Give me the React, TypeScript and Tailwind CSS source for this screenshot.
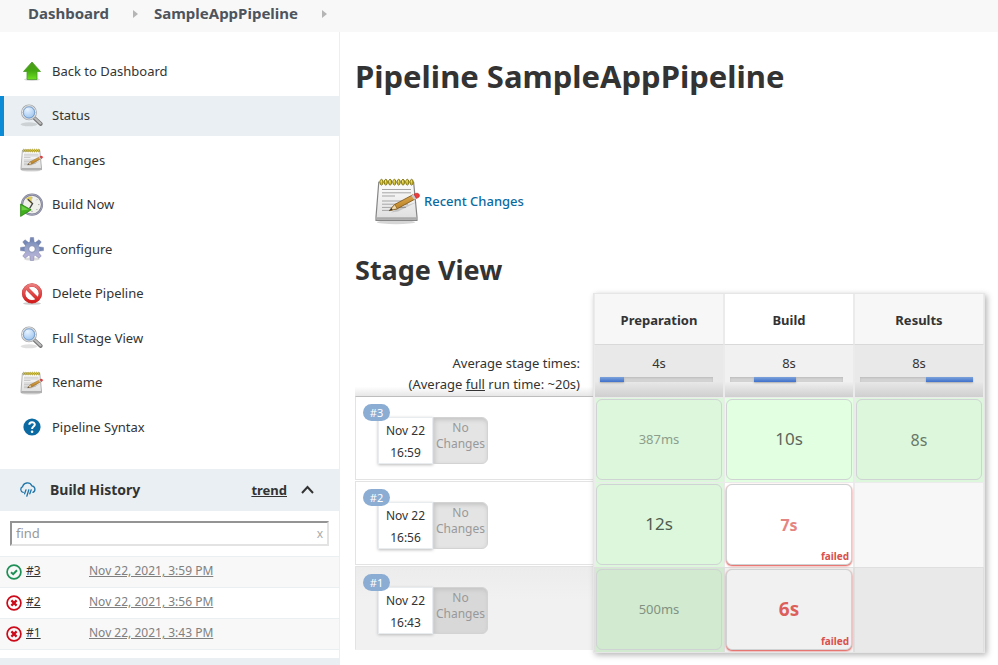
import { useState } from 'react';
import type { ReactNode } from 'react';

function ArrowUpIcon() {
  return (
    <svg width="24" height="24" viewBox="0 0 24 24" aria-hidden="true">
      <defs>
        <linearGradient id="up-green" x1="0" y1="0" x2="0" y2="1">
          <stop offset="0" stopColor="#4f9a1c" />
          <stop offset="0.5" stopColor="#43a80f" />
          <stop offset="1" stopColor="#6ee01f" />
        </linearGradient>
      </defs>
      <ellipse cx="12" cy="20.5" rx="8" ry="1.5" fill="#000" opacity="0.15" />
      <path d="M12 3 L20.5 12.5 H17 V20.5 H7 V12.5 H3.5 Z" fill="url(#up-green)" stroke="#4a9a2a" strokeWidth="0.8" strokeLinejoin="round" />
    </svg>
  );
}

function SearchIcon() {
  return (
    <svg width="24" height="24" viewBox="0 0 24 24" aria-hidden="true">
      <defs>
        <radialGradient id="lens" cx="0.4" cy="0.3" r="0.8">
          <stop offset="0" stopColor="#eaf4ff" />
          <stop offset="0.55" stopColor="#b5d4f5" />
          <stop offset="1" stopColor="#8db9ea" />
        </radialGradient>
      </defs>
      <ellipse cx="9" cy="20.3" rx="8.5" ry="2" fill="#000" opacity="0.12" />
      <path d="M14.2 13.8 L20.8 20" stroke="#777" strokeWidth="3.8" strokeLinecap="round" />
      <path d="M15 14.2 L20.6 19.4" stroke="#bcbcbc" strokeWidth="2" strokeLinecap="round" />
      <circle cx="9" cy="8.4" r="7" fill="url(#lens)" stroke="#a4a7aa" strokeWidth="1.8" />
      <circle cx="9" cy="8.4" r="6.7" fill="none" stroke="#e7e9ea" strokeWidth="1" />
      <circle cx="9" cy="8.4" r="5.6" fill="none" stroke="#6b93c4" strokeWidth="0.8" />
    </svg>
  );
}

function NotepadIcon({ size = 24 }: { size?: number }) {
  const rings = [6.5, 10.8, 15.1, 19.4, 23.7, 28, 32.3, 36.6];
  return (
    <svg width={size} height={size} viewBox="0 0 48 48" aria-hidden="true">
      <defs>
        <linearGradient id="paper" x1="0" y1="0" x2="0" y2="1">
          <stop offset="0" stopColor="#fdfdfd" />
          <stop offset="1" stopColor="#dedede" />
        </linearGradient>
        <linearGradient id="pencil" x1="0" y1="0" x2="0.4" y2="1">
          <stop offset="0" stopColor="#edbd63" />
          <stop offset="1" stopColor="#b3781c" />
        </linearGradient>
      </defs>
      <ellipse cx="22" cy="45.2" rx="19" ry="2" fill="#000" opacity="0.16" />
      <path d="M4.8 5 H39.6 L43 40 V43.4 H2 V40 Z" fill="url(#paper)" stroke="#858585" strokeWidth="1.2" strokeLinejoin="round" />
      <path d="M2.8 40.2 H42.4 V42.8 H2.8 Z" fill="#aaa" />
      <path d="M8 12.5 H37 M8 15.8 H37 M8 19 H21 M8 24 H36 M8 27.2 H34 M8 30.4 H32 M8 33.4 H16" stroke="#a5a5a5" strokeWidth="1" />
      {rings.map((x) => (
        <g key={x}>
          <ellipse cx={x + 1} cy="5.2" rx="1.5" ry="2.9" fill="#d3bf2c" stroke="#857812" strokeWidth="1" />
          <path d={`M${x + 0.6} 3.4 V5.4`} stroke="#fff28a" strokeWidth="0.9" />
        </g>
      ))}
      <path d="M17 35.6 L24 34.4 L43 25 L24 31 Z" fill="#000" opacity="0.15" />
      <path d="M15.4 33.6 L20.8 27.4 L38.8 17.8 L41.2 22 L23.2 31.8 Z" fill="url(#pencil)" stroke="#7b500e" strokeWidth="0.8" strokeLinejoin="round" />
      <path d="M15.4 33.6 L20.8 27.4 L23.2 31.8 Z" fill="#f1d9ae" stroke="#7b500e" strokeWidth="0.6" />
      <path d="M15.4 33.6 L17.6 31 L18.6 32.9 Z" fill="#333" />
      <path d="M37.4 18.6 L40 17.2 L42.4 21.4 L40 22.8 Z" fill="#c9c9d4" />
      <path d="M40 17.2 C42.2 15.6 44.8 16 45.4 18 C45.8 19.8 44.4 20.8 42.4 21.4 Z" fill="#ef3b3b" stroke="#b32626" strokeWidth="0.6" />
    </svg>
  );
}

function ClockIcon() {
  return (
    <svg width="24" height="24" viewBox="0 0 24 24" aria-hidden="true">
      <circle cx="12" cy="11.6" r="10" fill="#f1f1ec" stroke="#7d7e96" strokeWidth="2.2" />
      <circle cx="12" cy="11.6" r="10.2" fill="none" stroke="#b5b7c8" strokeWidth="0.7" />
      <path d="M12 11.6 L5.8 5.6 A8.6 8.6 0 0 1 11.5 3.2 Z" fill="#dccb5b" />
      <path d="M7.8 6.2 L12.6 10.6 L9.6 15.4" fill="none" stroke="#444" strokeWidth="1.3" />
      <path d="M12 4.2 V5.4 M19.4 11.6 H18.2 M12 19 V17.8 M17.2 6.4 L16.4 7.2 M17.2 16.8 L16.4 16" stroke="#999" strokeWidth="1" />
      <path d="M0.6 11 L11.2 16.8 L0.6 23.4 Z" fill="#3fb01c" stroke="#27850e" strokeWidth="0.8" strokeLinejoin="round" />
      <path d="M1.6 12.8 L8.6 16.6 L1.6 17.4 Z" fill="#6bd042" />
    </svg>
  );
}

function GearIcon() {
  const teeth = [0, 45, 90, 135, 180, 225, 270, 315];
  return (
    <svg width="24" height="24" viewBox="0 0 24 24" aria-hidden="true">
      <defs>
        <linearGradient id="gear" gradientUnits="userSpaceOnUse" x1="12" y1="0" x2="12" y2="24">
          <stop offset="0" stopColor="#6b83b3" />
          <stop offset="0.5" stopColor="#9aa5c9" />
          <stop offset="1" stopColor="#c3b9de" />
        </linearGradient>
        <mask id="gear-hole">
          <rect width="24" height="24" fill="#fff" />
          <circle cx="12" cy="12" r="3.2" fill="#000" />
        </mask>
      </defs>
      <ellipse cx="12" cy="22" rx="8" ry="1.6" fill="#000" opacity="0.14" />
      <g mask="url(#gear-hole)">
        {teeth.map((a) => (
          <path key={a} d="M9.8 5.4 L10.4 0.5 H13.6 L14.2 5.4 Z" fill={a > 90 && a < 270 ? '#b3aed4' : '#7588b6'} stroke="#6a739b" strokeWidth="0.4" transform={`rotate(${a} 12 12)`} />
        ))}
        <circle cx="12" cy="12" r="7.6" fill="url(#gear)" />
      </g>
      <circle cx="12" cy="12" r="3.3" fill="none" stroke="#7b84aa" strokeWidth="0.8" />
    </svg>
  );
}

function DeleteIcon() {
  return (
    <svg width="24" height="24" viewBox="0 0 24 24" aria-hidden="true">
      <defs>
        <linearGradient id="ban" gradientUnits="userSpaceOnUse" x1="12" y1="2" x2="12" y2="22">
          <stop offset="0" stopColor="#ec8080" />
          <stop offset="0.5" stopColor="#e04444" />
          <stop offset="1" stopColor="#d01212" />
        </linearGradient>
      </defs>
      <ellipse cx="12" cy="21.4" rx="9" ry="1.4" fill="#000" opacity="0.2" />
      <circle cx="12" cy="11.4" r="8.4" fill="#fff" stroke="#c23a3a" strokeWidth="3.4" />
      <path d="M6.2 5.6 L17.8 17.2" stroke="#c23a3a" strokeWidth="3.4" />
      <circle cx="12" cy="11.4" r="8.4" fill="none" stroke="url(#ban)" strokeWidth="2.8" />
      <path d="M6.2 5.6 L17.8 17.2" stroke="url(#ban)" strokeWidth="2.8" />
    </svg>
  );
}

function HelpIcon() {
  return (
    <svg width="24" height="24" viewBox="0 0 24 24" aria-hidden="true">
      <circle cx="12" cy="12" r="8.6" fill="#0b6aa2" />
      <path d="M9.3 9.8 C9.3 6.4 14.8 6.4 14.8 9.6 C14.8 11.6 12.1 11.6 12.1 13.9" fill="none" stroke="#fff" strokeWidth="2" />
      <circle cx="12.1" cy="16.7" r="1.3" fill="#fff" />
    </svg>
  );
}

function RainIcon() {
  return (
    <svg width="18" height="18" viewBox="0 0 18 18" aria-hidden="true" fill="none" stroke="#1f74a8" strokeWidth="1.3" strokeLinecap="round">
      <path d="M4.2 11.4 A3 3 0 0 1 3.6 5.7 A4.9 4.9 0 0 1 12.8 4.8 A3.5 3.5 0 0 1 14 11.4" />
      <path d="M7 8.8 L5.6 12.8 M9.8 8.8 L7.8 15.2 M12.2 8.8 L10.8 12.8" />
    </svg>
  );
}

function StatusIcon({ ok }: { ok: boolean }) {
  const color = ok ? '#1e8f57' : '#cc0a1a';
  return (
    <svg width="16" height="16" viewBox="0 0 16 16" role="img" aria-label={ok ? 'Success' : 'Failed'} fill="none" stroke={color}>
      <circle cx="8" cy="8" r="6.9" strokeWidth="1.7" />
      {ok ? (
        <path d="M5 8.2 L7.2 10.2 L11 6.2" strokeWidth="2" />
      ) : (
        <path d="M5.4 5.4 L10.6 10.6 M10.6 5.4 L5.4 10.6" strokeWidth="2.2" />
      )}
    </svg>
  );
}

function Crumb({ children }: { children: ReactNode }) {
  return (
    <li className="flex items-center">
      <a href="#" className="text-[#4d545d]">{children}</a>
      <svg width="5" height="8" viewBox="0 0 5 8" className="ml-6 mr-4" aria-hidden="true">
        <path d="M0 0 L5 4 L0 8 Z" fill="#b5b5b5" />
      </svg>
    </li>
  );
}

const tasks = [
  { label: 'Back to Dashboard', icon: <ArrowUpIcon /> },
  { label: 'Status', icon: <SearchIcon />, active: true },
  { label: 'Changes', icon: <NotepadIcon /> },
  { label: 'Build Now', icon: <ClockIcon /> },
  { label: 'Configure', icon: <GearIcon /> },
  { label: 'Delete Pipeline', icon: <DeleteIcon /> },
  { label: 'Full Stage View', icon: <SearchIcon /> },
  { label: 'Rename', icon: <NotepadIcon /> },
  { label: 'Pipeline Syntax', icon: <HelpIcon /> },
];

const builds = [
  { id: '#3', time: 'Nov 22, 2021, 3:59 PM', ok: true },
  { id: '#2', time: 'Nov 22, 2021, 3:56 PM', ok: false },
  { id: '#1', time: 'Nov 22, 2021, 3:43 PM', ok: false },
];

const stages = [
  { name: 'Preparation', average: '4s', start: 0, length: 21 },
  { name: 'Build', average: '8s', start: 21, length: 37 },
  { name: 'Results', average: '8s', start: 58, length: 42 },
];

type Cell = { time: string; failed?: boolean; text: string } | null;

const runs: { id: string; date: string; time: string; cells: Cell[] }[] = [
  {
    id: '#3',
    date: 'Nov 22',
    time: '16:59',
    cells: [
      { time: '387ms', text: 'text-[13px] text-[#8c9e8c]' },
      { time: '10s', text: 'text-[17px] text-[#5c675c]' },
      { time: '8s', text: 'text-base text-[#687768]' },
    ],
  },
  {
    id: '#2',
    date: 'Nov 22',
    time: '16:56',
    cells: [
      { time: '12s', text: 'text-[17px] text-[#4f5c4f]' },
      { time: '7s', failed: true, text: 'text-base font-bold text-[#e58581]' },
      null,
    ],
  },
  {
    id: '#1',
    date: 'Nov 22',
    time: '16:43',
    cells: [
      { time: '500ms', text: 'text-[13px] text-[#829282]' },
      { time: '6s', failed: true, text: 'text-[19px] font-bold text-[#dd5f5b]' },
      null,
    ],
  },
];

function StageCell({ cell, middle, last }: { cell: Cell; middle: boolean; last: boolean }) {
  let tone = last ? 'bg-[#e9e9e9]' : 'bg-[#f7f7f7]';
  if (middle) tone = last ? 'bg-[#f1f1f1]' : 'bg-white';
  if (cell && !cell.failed) {
    tone = last ? 'bg-[#d1ead0]' : middle ? 'bg-[#e3ffe2]' : 'bg-[#ddf7dc]';
  }
  return (
    <td className={`border-t border-r border-l p-px pb-[2px] ${last ? 'border-[#dfdfdf]' : 'border-[#ebebeb]'} ${tone}`}>
      {cell ? (
        <div
          className={`relative flex h-[81px] items-center justify-center rounded-md border border-[#cfd3d3] ${
            cell.failed ? 'shadow-[0_1px_2px_#e04a45]' : ''
          } ${tone}`}
        >
          <span className={cell.text}>{cell.time}</span>
          {cell.failed && (
            <span className="absolute right-[2px] bottom-0 text-[10px] leading-4 font-bold text-[#d9504c]">failed</span>
          )}
        </div>
      ) : (
        <div className="h-[81px]" />
      )}
    </td>
  );
}

function StageTable() {
  return (
    <div className="relative">
      <table className="w-full table-fixed border-separate border-spacing-0">
        <thead>
          <tr>
            <td className="h-[51px] w-[239px]" />
            {stages.map((s, i) => (
              <th
                key={s.name}
                scope="col"
                className={`border-r border-b border-l border-r-[#ebebeb] border-b-[#d9d9d9] border-l-[#ebebeb] pt-[2px] text-[13px] font-bold text-[#333] ${
                  i === 1 ? 'bg-white' : 'bg-[#f7f7f7]'
                }`}
              >
                {s.name}
              </th>
            ))}
          </tr>
          <tr>
            <th
              scope="row"
              className="h-[52px] bg-linear-to-b from-transparent from-80% to-[#e4e4e4] pr-[14px] pt-[8px] text-right align-top text-[13px] leading-[21px] font-normal whitespace-nowrap text-[#333]"
            >
              Average stage times:
              <br />
              (Average <u>full</u> run time: ~20s)
            </th>
            {stages.map((s, i) => (
              <td
                key={s.name}
                className={`border-r border-l border-[#ebebeb] bg-linear-to-b from-70% to-[#cfcfcf] pt-[8px] pr-[10px] pl-[5px] align-top ${
                  i === 1 ? 'from-[#f1f1f1]' : 'from-[#e9e9e9]'
                }`}
              >
                <div className="pl-[5px] text-center text-[13px] leading-[21px] text-[#333]">{s.average}</div>
                <div className="mt-[3px] flex h-[5px] bg-[#d3d3d3] shadow-[inset_0_1px_2px_#bbb]">
                  <div style={{ width: `${s.start}%` }} />
                  <div
                    className="bg-linear-to-b from-[#7ea3dc] to-[#3f70ca] shadow-[0_1px_2px_#aaa]"
                    style={{ width: `${s.length}%` }}
                  />
                </div>
              </td>
            ))}
          </tr>
        </thead>
        <tbody>
          {runs.map((run, r) => {
            const last = r === runs.length - 1;
            return (
              <tr key={run.id}>
                <th scope="row" className="p-0 text-left align-top font-normal">
                  <div
                    className={`-mt-px flex h-[84px] border border-r-0 pt-[7px] pl-[7px] ${
                      last
                        ? 'border-[#e3e3e3] border-b-[#f1f1f1] bg-linear-to-b from-[#ececec] to-[#f1f1f1] to-40%'
                        : 'border-[#e3e3e3] bg-white'
                    } ${r === 0 ? 'border-t-[#bdbdbd]' : ''}`}
                  >
                    <span className="z-10 -mr-[12px] flex h-[17px] w-[27px] items-center justify-center rounded-full bg-[#8badd3] text-[11px] text-white">
                      {run.id}
                    </span>
                    <div className="mt-[13px] flex h-[47px] text-xs text-[#333]">
                      <div className="w-[55px] border border-[#e8ecee] bg-white pt-[2px] text-center leading-[22px] shadow-[0_1px_3px_#bbb]">
                        {run.date}
                        <br />
                        {run.time}
                      </div>
                      <div
                        className={`w-[55px] rounded-r-md border border-[#d3d3d3] pt-[2px] text-center leading-4 text-[#999] shadow-[inset_1px_2px_4px_#c4c4c4] ${
                          last ? 'bg-[#d8d8d8]' : 'bg-[#e4e4e4]'
                        }`}
                      >
                        No
                        <br />
                        Changes
                      </div>
                    </div>
                  </div>
                </th>
                {run.cells.map((cell, c) => (
                  <StageCell key={stages[c].name} cell={cell} middle={c === 1} last={last} />
                ))}
              </tr>
            );
          })}
        </tbody>
      </table>
      <div className="pointer-events-none absolute -top-px right-[-1px] -bottom-px left-[238px] border border-[#e6e6e6] shadow-[2px_2px_6px_#b5b5b5]" />
    </div>
  );
}

export default function App() {
  const [filter, setFilter] = useState('');
  return (
    <div className="flex h-screen flex-col overflow-hidden bg-white font-['Noto_Sans',sans-serif] text-sm text-[#333]">
      <nav aria-label="Breadcrumb" className="h-8 shrink-0 bg-[#f8f8f8] pl-7">
        <ol className="flex h-7 items-center text-[15px] font-bold">
          <Crumb>Dashboard</Crumb>
          <Crumb>SampleAppPipeline</Crumb>
        </ol>
      </nav>

      <div className="flex min-h-0 flex-1">
        <aside className="w-[340px] shrink-0 border-r border-[#eaeff2] pt-[19px]">
          <nav aria-label="Tasks" className="flex h-[396px] flex-col justify-between text-[13px]">
            {tasks.map((t) => (
              <a
                key={t.label}
                href="#"
                className={`flex h-10 items-center gap-2 border-l-4 pl-4 ${
                  t.active ? 'border-[#0b8bd6] bg-[#e9eff2]' : 'border-transparent'
                }`}
              >
                {t.icon}
                {t.label}
              </a>
            ))}
          </nav>

          <section className="mt-[22px]">
            <div className="flex h-[42px] items-center bg-[#e9eff2] pr-[25px] pl-[19px] text-[13px] font-bold">
              <RainIcon />
              <h2 className="ml-[13px] flex-1 text-sm">Build History</h2>
              <a href="#" className="underline">trend</a>
              <button type="button" aria-label="Collapse" className="ml-[14px]">
                <svg width="13" height="10" viewBox="0 0 13 10" fill="none" stroke="#333" strokeWidth="2" aria-hidden="true">
                  <path d="M1 8 L6.5 2 L12 8" />
                </svg>
              </button>
            </div>
            <div className="mx-[10px] mt-[10px] mb-[10px] flex h-[25px] items-center border-2 border-t-[#949494] border-r-[#e3e3e3] border-b-[#e3e3e3] border-l-[#949494] px-1">
              <input
                aria-label="find"
                placeholder="find"
                value={filter}
                onChange={(e) => setFilter(e.target.value)}
                className="min-w-0 flex-1 text-[13px] outline-none placeholder:text-[#999]"
              />
              <button type="button" aria-label="Clear" onClick={() => setFilter('')} className="text-xs leading-4 text-[#aaa]">
                x
              </button>
            </div>
            <table className="w-full border-collapse text-xs">
              <tbody>
                {builds.map((b) => (
                  <tr key={b.id} className="h-[31px] border-y border-[#eaeff2] odd:bg-[#f8f8f8]">
                    <td className="w-[26px] pl-[6px]">
                      <StatusIcon ok={b.ok} />
                    </td>
                    <td className="w-[63px] pb-[2px]">
                      <a href="#" className="underline">{b.id}</a>
                    </td>
                    <td className="pb-[2px]">
                      <a href="#" className="text-[#808080] underline">{b.time}</a>
                    </td>
                  </tr>
                ))}
              </tbody>
            </table>
            <div className="mt-2 h-10 bg-[#e9eff2]" />
          </section>
        </aside>

        <main className="min-w-0 flex-1 pt-[23px] pr-[14px] pl-[15px]">
          <h1 className="text-[31px] leading-[42px] font-bold">Pipeline SampleAppPipeline</h1>
          <a href="#" className="mt-[80px] ml-[19px] flex items-center gap-[2px] text-[13px] font-medium text-[#0b6aa2]">
            <NotepadIcon size={48} />
            Recent Changes
          </a>
          <h2 className="mt-[27px] mb-[6px] text-[27px] leading-[36px] font-bold">Stage View</h2>
          <StageTable />
        </main>
      </div>
    </div>
  );
}
